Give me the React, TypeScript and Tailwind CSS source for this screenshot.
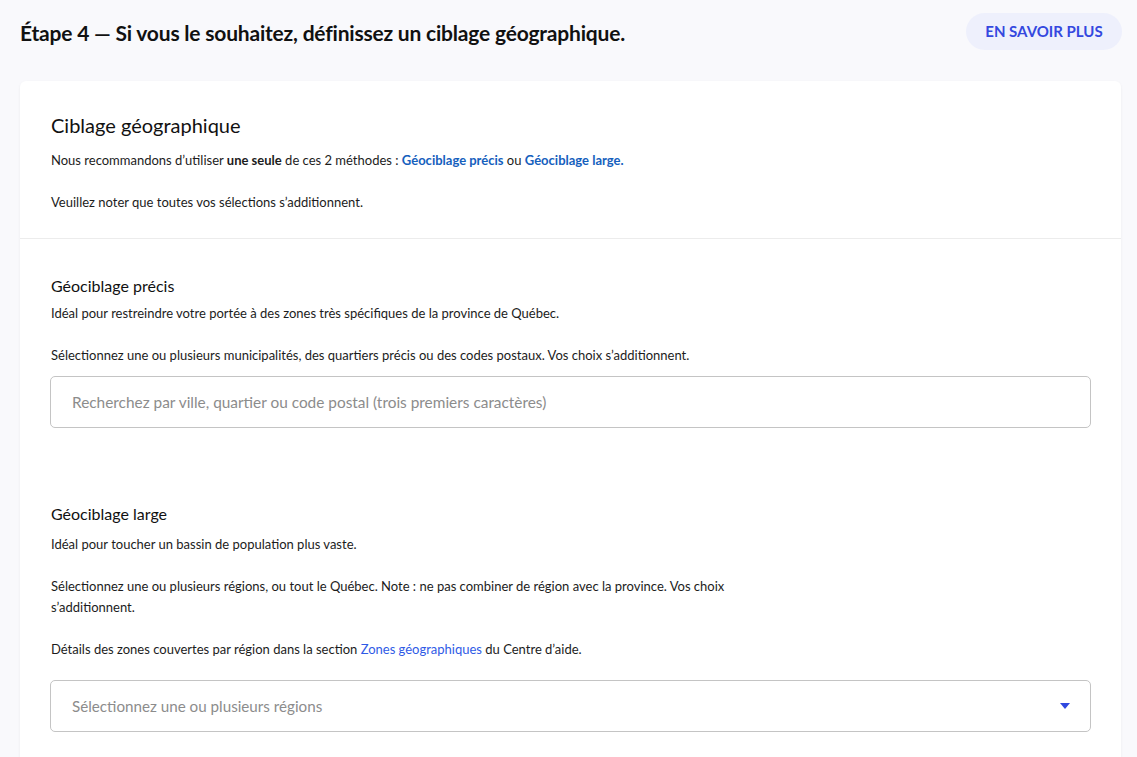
import React from "react";

const Paragraph = ({ children, className = "" }: { children: React.ReactNode; className?: string }) => (
  <p className={`text-[13px] leading-[21px] text-[#1c1c1c] ${className}`}>{children}</p>
);

const App = () => {
  return (
    <div className="min-h-screen bg-[#f9f9fc] pl-5 pr-[15px] font-['Lato',sans-serif] text-[#111]">
      <header className="flex h-[81px] items-start justify-between pt-[13px]">
        <h1 className="mt-[6px] text-[21px] font-bold leading-[28px] tracking-[-0.2px] text-[#111]">
          Étape 4 — Si vous le souhaitez, définissez un ciblage géographique.
        </h1>
        <button className="h-[37px] w-[156px] rounded-full bg-[#eef0fc] text-[15px] font-bold uppercase text-[#3448df]">
          En savoir plus
        </button>
      </header>

      <div className="mr-px rounded-md bg-white shadow-[0_1px_3px_rgba(0,0,0,0.06)]">
        <section className="px-[31px] pb-[25px] pt-[30px]">
          <h2 className="text-[20px] leading-[28px] text-[#111]">Ciblage géographique</h2>
          <Paragraph className="mt-[11px]">
            Nous recommandons d’utiliser <span className="font-bold">une seule</span> de ces 2 méthodes :{" "}
            <a className="font-bold text-[#1560bd]">Géociblage précis</a> ou{" "}
            <a className="font-bold text-[#1560bd]">Géociblage large.</a>
          </Paragraph>
          <Paragraph className="mt-[21px]">Veuillez noter que toutes vos sélections s’additionnent.</Paragraph>
        </section>

        <section className="border-t border-[#ececec] px-[30px] pb-12 pt-[35px]">
          <div className="pl-px">
            <h3 className="text-[16px] leading-[24px] text-[#111]">Géociblage précis</h3>
            <Paragraph className="mt-[5px]">
              Idéal pour restreindre votre portée à des zones très spécifiques de la province de Québec.
            </Paragraph>
            <Paragraph className="mt-[21px]">
              Sélectionnez une ou plusieurs municipalités, des quartiers précis ou des codes postaux. Vos choix
              s’additionnent.
            </Paragraph>
          </div>
          <input
            className="mt-[10px] h-[52px] w-full rounded-[5px] border border-[#c4c4c4] px-[21px] text-[15.4px] text-[#111] outline-none placeholder:text-[#8c8c8c]"
            placeholder="Recherchez par ville, quartier ou code postal (trois premiers caractères)"
          />

          <div className="pl-px">
            <h3 className="mt-[74px] text-[16px] leading-[24px] text-[#111]">Géociblage large</h3>
            <Paragraph className="mt-[8px]">Idéal pour toucher un bassin de population plus vaste.</Paragraph>
            <Paragraph className="mt-[21px] max-w-[700px]">
              Sélectionnez une ou plusieurs régions, ou tout le Québec. Note : ne pas combiner de région avec la
              province. Vos choix s’additionnent.
            </Paragraph>
            <Paragraph className="mt-[21px]">
              Détails des zones couvertes par région dans la section{" "}
              <a className="text-[#2f5be6]">Zones géographiques</a> du Centre d’aide.
            </Paragraph>
          </div>
          <div className="mt-[20px] flex h-[52px] w-full items-center justify-between rounded-[5px] border border-[#c4c4c4] pl-[21px] pr-[20px]">
            <span className="text-[15.2px] text-[#8c8c8c]">Sélectionnez une ou plusieurs régions</span>
            <svg width="10" height="6" viewBox="0 0 10 6">
              <path d="M0 0h10L5 6z" fill="#2f48df" />
            </svg>
          </div>
        </section>
      </div>
    </div>
  );
};

export default App;
